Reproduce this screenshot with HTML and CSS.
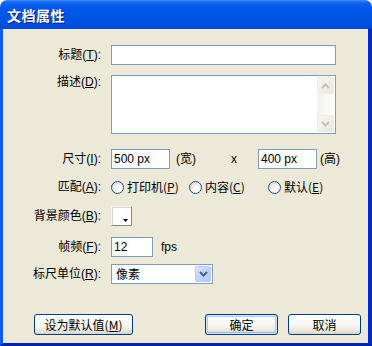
FILE: index.html
```html
<!DOCTYPE html>
<html lang="zh-CN">
<head>
  <meta charset="UTF-8">
  <title>文档属性</title>
  <link rel="stylesheet" href="styles.css">
</head>
<body>
  <div class="window">
    <div class="titlebar">
      <span class="title">文档属性</span>
    </div>
    <div class="frame">
      <div class="row row-title">
        <span class="lbl">标题(<u>T</u>):</span>
        <div class="field w-title"></div>
      </div>

      <div class="row row-desc">
        <span class="lbl lbl-top">描述(<u>D</u>):</span>
        <div class="field area">
          <div class="scroll">
            <div class="sbtn">
              <svg width="9" height="6" viewBox="0 0 9 6"><polyline points="1,5 4.5,1.5 8,5" fill="none" stroke="#c3c2bb" stroke-width="2"/></svg>
            </div>
            <div class="strack"></div>
            <div class="sbtn">
              <svg width="9" height="6" viewBox="0 0 9 6"><polyline points="1,1 4.5,4.5 8,1" fill="none" stroke="#c3c2bb" stroke-width="2"/></svg>
            </div>
          </div>
        </div>
      </div>

      <div class="row row-size">
        <span class="lbl">尺寸(<u>I</u>):</span>
        <div class="field w-size">500 px</div>
        <span class="unit-w">(宽)</span>
        <span class="times">x</span>
        <div class="field w-size">400 px</div>
        <span class="unit-h">(高)</span>
      </div>

      <div class="row row-match">
        <span class="lbl">匹配(<u>A</u>):</span>
        <span class="opt opt1"><span class="radio"></span>打印机(<u>P</u>)</span>
        <span class="opt opt2"><span class="radio"></span>内容(<u>C</u>)</span>
        <span class="opt"><span class="radio"></span>默认(<u>E</u>)</span>
      </div>

      <div class="row row-bg">
        <span class="lbl">背景颜色(<u>B</u>):</span>
        <div class="swatch">
          <svg class="swatch-arrow" width="5" height="3" viewBox="0 0 5 3"><polygon points="0,0 5,0 2.5,3" fill="#000"/></svg>
        </div>
      </div>

      <div class="row row-fps">
        <span class="lbl">帧频(<u>F</u>):</span>
        <div class="field w-fps">12</div>
        <span class="fps">fps</span>
      </div>

      <div class="row row-ruler">
        <span class="lbl">标尺单位(<u>R</u>):</span>
        <div class="field select">
          <span class="select-text">像素</span>
          <div class="drop">
            <svg width="9" height="6" viewBox="0 0 9 6"><polyline points="1,1 4.5,4.5 8,1" fill="none" stroke="#4d6185" stroke-width="2"/></svg>
          </div>
        </div>
      </div>

      <div class="buttons">
        <div class="btn btn-default-val">设为默认值(<u>M</u>)</div>
        <div class="btn-group">
          <div class="btn btn-ok">确定</div>
          <div class="btn">取消</div>
        </div>
      </div>
    </div>
  </div>
</body>
</html>
```

FILE: styles.css
```css
* {
  margin: 0;
  padding: 0;
  box-sizing: border-box;
}
body {
  background: #fff;
  font-family: 'Liberation Sans', 'Noto Sans CJK SC', sans-serif;
  font-size: 12px;
  color: #000;
}
u {
  text-decoration: underline;
}
.window {
  width: 372px;
  height: 346px;
  display: flex;
  flex-direction: column;
}
.titlebar {
  height: 29px;
  border-radius: 7px 7px 0 0;
  background: linear-gradient(#3d8dfd 0, #1a6bf3 2px, #0a5cec 5px, #0057e8 12px, #0053e0 22px, #0048d4 29px);
  display: flex;
  align-items: center;
  padding-left: 7px;
}
.title {
  font-family: 'Noto Sans CJK SC', sans-serif;
  font-weight: bold;
  font-size: 14px;
  color: #fff;
  letter-spacing: 0.5px;
  text-shadow: 1px 1px 0 #0a1b7a;
}
.frame {
  flex: 1;
  background: #ece9d8;
  border-left: 3px solid #0b5bef;
  border-right: 4px solid #0428c0;
  border-bottom: 3px solid #0222b4;
  padding-top: 16px;
}
.row {
  display: flex;
  align-items: center;
  height: 20px;
  line-height: 20px;
}
.lbl {
  width: 98px;
  margin-right: 10px;
  text-align: right;
  white-space: nowrap;
}
.lbl-top {
  line-height: 14px;
  align-self: flex-start;
}
.field {
  height: 20px;
  border: 1px solid #7f9db9;
  background: #fff;
  padding-left: 2px;
  line-height: 18px;
}
.w-title {
  width: 225px;
}
.row-desc {
  margin-top: 10px;
  height: 59px;
  align-items: flex-start;
}
.area {
  width: 225px;
  height: 59px;
  display: flex;
  justify-content: flex-end;
  padding: 1px;
}
.scroll {
  width: 17px;
  display: flex;
  flex-direction: column;
}
.sbtn {
  height: 17px;
  border: 1px solid #eeede5;
  border-radius: 2px;
  background: linear-gradient(135deg, #f6f5ef, #e9e8e0);
  display: flex;
  align-items: center;
  justify-content: center;
}
.strack {
  flex: 1;
  background: linear-gradient(90deg, #f3f1ec, #fefefb);
}
.row-size {
  margin-top: 15px;
}
.w-size {
  width: 59px;
}
.unit-w {
  margin-left: 6px;
  width: 55px;
}
.times {
  width: 27px;
}
.unit-h {
  margin-left: 3px;
}
.row-match {
  margin-top: 8px;
}
.opt {
  display: flex;
  align-items: center;
  font-family: 'Noto Sans CJK SC', sans-serif;
}
.opt1 {
  width: 78px;
}
.opt2 {
  width: 79px;
}
.radio {
  width: 13px;
  height: 13px;
  border-radius: 50%;
  border: 1px solid #1c5180;
  background: radial-gradient(circle at 65% 65%, #fff 20%, #e6e6df 60%, #cfcfc6 100%);
  margin-right: 3px;
}
.row-bg {
  margin-top: 8px;
  height: 21px;
}
.swatch {
  position: relative;
  width: 21px;
  height: 20px;
  background: #fff;
  border: 1px solid;
  border-color: #f4f3ee #8d8a7d #8d8a7d #f4f3ee;
  box-shadow: inset 1px 1px 0 #d8d5c8;
}
.swatch-arrow {
  position: absolute;
  right: 3px;
  bottom: 3px;
}
.row-fps {
  margin-top: 11px;
}
.w-fps {
  width: 42px;
}
.fps {
  margin-left: 8px;
}
.row-ruler {
  margin-top: 7px;
}
.select {
  width: 102px;
  display: flex;
  align-items: center;
  padding: 1px;
}
.select-text {
  flex: 1;
  padding-left: 3px;
  font-family: 'Noto Sans CJK SC', sans-serif;
}
.drop {
  width: 16px;
  height: 16px;
  border-radius: 2px;
  border: 1px solid #b9cbf5;
  background: linear-gradient(135deg, #d4e1fd, #b2c7f8);
  display: flex;
  align-items: center;
  justify-content: center;
}
.buttons {
  margin-top: 30px;
  display: flex;
  padding-left: 31px;
  padding-right: 7px;
}
.btn {
  width: 73px;
  height: 21px;
  border: 1px solid #003c74;
  border-radius: 3px;
  background: linear-gradient(#ffffff, #f4f4f0 60%, #e3e0d5 90%, #d6d0c5);
  text-align: center;
  line-height: 19px;
  font-family: 'Noto Sans CJK SC', sans-serif;
}
.btn-default-val {
  width: 99px;
}
.btn-group {
  margin-left: auto;
  display: flex;
  gap: 10px;
}
.btn-ok {
  box-shadow: inset 0 0 0 1px #cee7ff, inset 0 -1px 0 1px #98b8ea, inset 0 0 0 2px #adcff7;
}
```
